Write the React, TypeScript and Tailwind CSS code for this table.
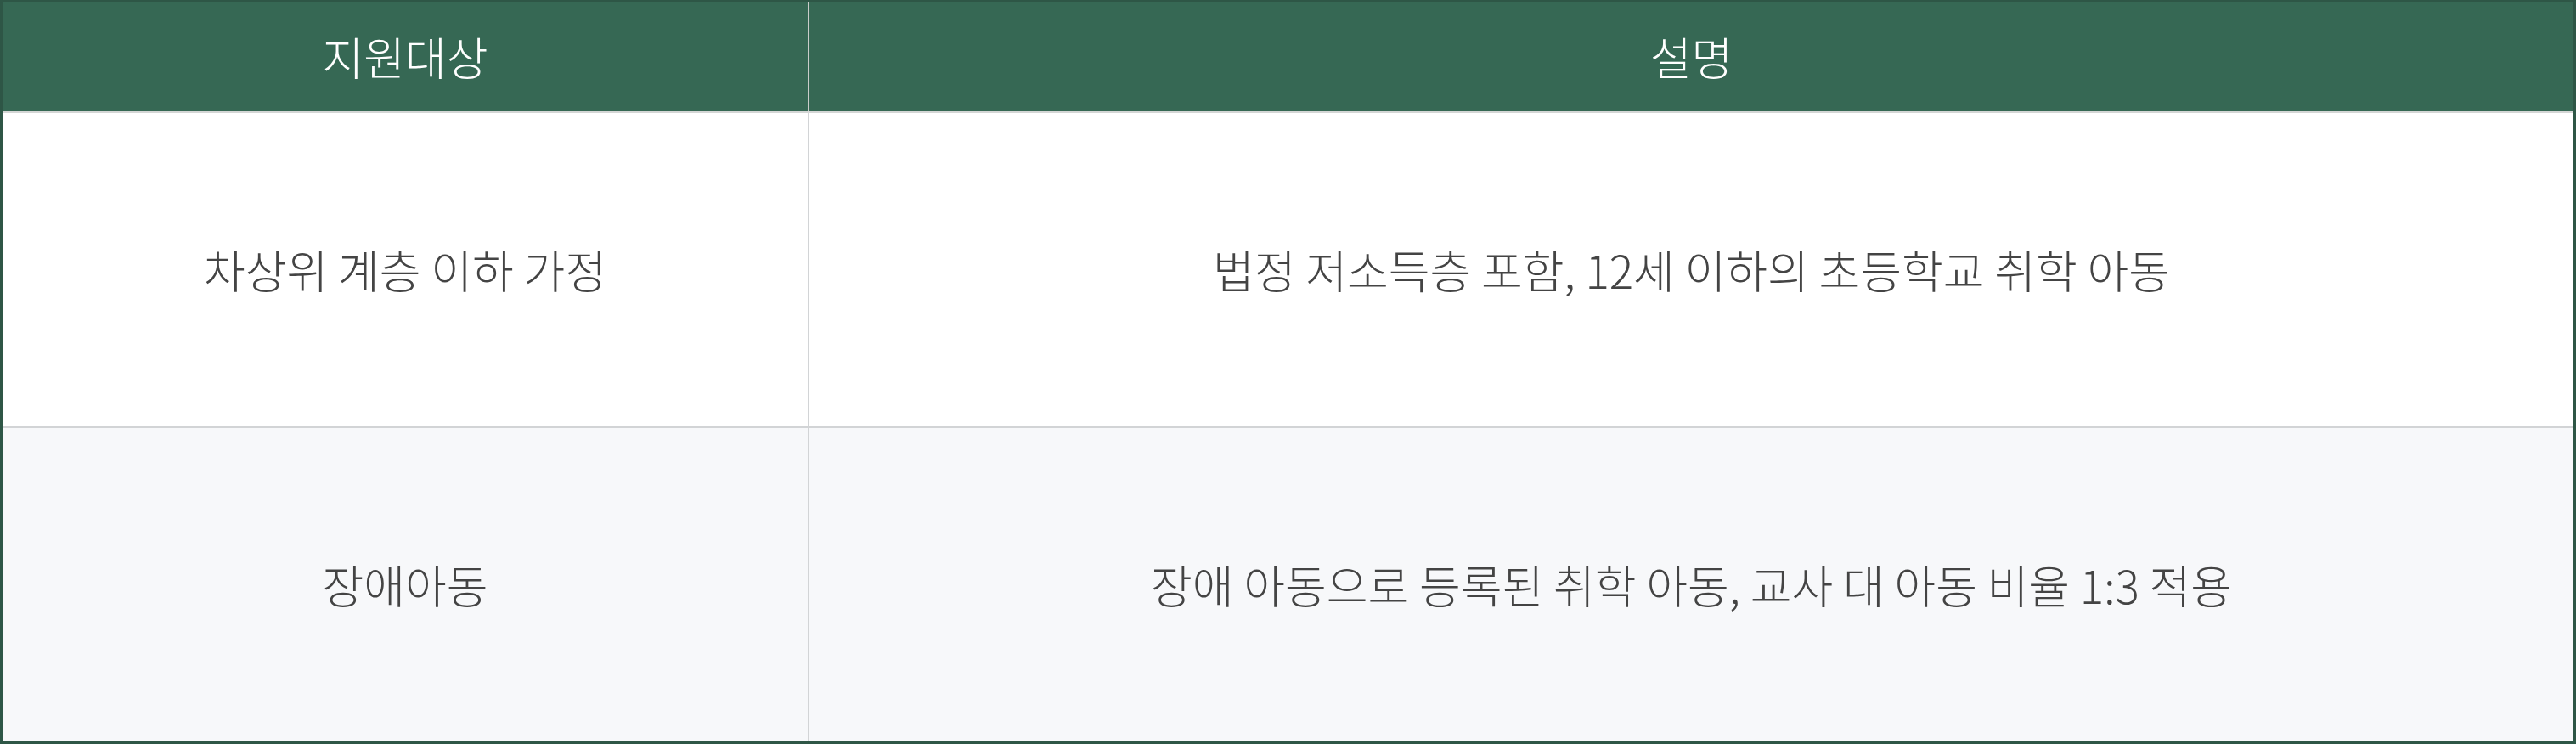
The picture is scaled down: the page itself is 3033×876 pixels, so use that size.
const rows = [
  { target: "차상위 계층 이하 가정", desc: "법정 저소득층 포함, 12세 이하의 초등학교 취학 아동", bg: "bg-white" },
  { target: "장애아동", desc: "장애 아동으로 등록된 취학 아동, 교사 대 아동 비율 1:3 적용", bg: "bg-[#f7f8fa]" },
]

export default function App() {
  return (
    <div
      className="w-[3033px] h-[876px] bg-white"
      style={{ fontFamily: '"Noto Sans CJK KR", "Noto Sans", sans-serif' }}
    >
      <div className="flex flex-col h-full border-[3px] border-t-2 border-[#2e5646]">
        {/* header */}
        <div className="grid grid-cols-[950px_1fr] h-[131px] bg-[#366854] border-b-2 border-[#d4d6d5] text-white text-[53px] font-light">
          <div className="flex items-center justify-center border-r-2 border-[#c9ccca]">지원대상</div>
          <div className="flex items-center justify-center">설명</div>
        </div>

        {rows.map((r, i) => (
          <div
            key={i}
            className={`grid grid-cols-[950px_1fr] flex-1 ${r.bg} text-[#444444] text-[53px] font-light ${
              i < rows.length - 1 ? "border-b-2 border-[#d2d4d6]" : ""
            }`}
          >
            <div className="flex items-center justify-center border-r-2 border-[#d2d4d6]">{r.target}</div>
            <div className="flex items-center justify-center">{r.desc}</div>
          </div>
        ))}
      </div>
    </div>
  )
}
